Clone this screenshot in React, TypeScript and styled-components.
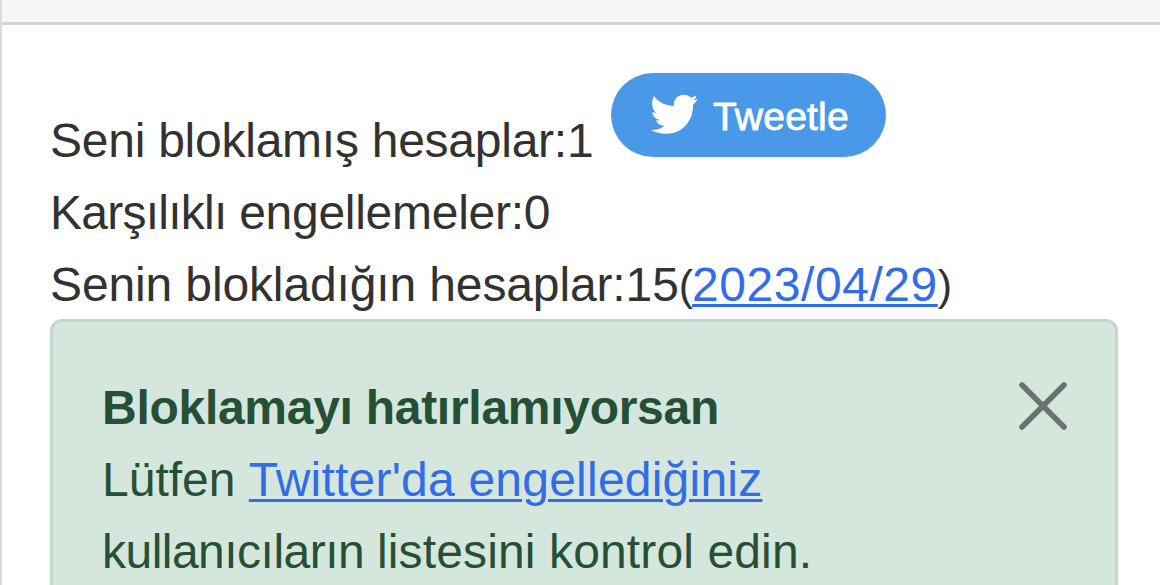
import React, { FunctionComponent } from 'react'
import styled, { createGlobalStyle } from 'styled-components'

const bodyFont = `'Liberation Sans', Arial, sans-serif`
const linkBlue = '#326cea'

const GlobalStyle = createGlobalStyle`
    * { box-sizing : border-box; }

    body {
        margin : 0;
        overflow : hidden;
        background : white;
    }
`

const Page = styled.div`
    width : 1160px;
    height : 585px;
    overflow : hidden;
    border-left : 2px solid #dcdcdc;
    font-family : ${bodyFont};
    font-size : 48px;
    line-height : 72px;
    color : #323232;
`

const TopBar = styled.div`
    height : 25px;
    background : #f6f6f6;
    border-bottom : 3px solid #d5d5d5;
`

const Content = styled.div`
    padding : 48px 42px 0 48px;
`

const Line = styled.div<{ spacing? : number }>`
    display : flex;
    align-items : flex-start;
    height : 72px;
    white-space : pre;
    letter-spacing : ${p => p.spacing || 0}px;
`

const FirstLine = styled(Line)`
    height : 104px;
`

const Text = styled.span`
    display : block;
    width : 543px;
    padding-top : 32px;
`

const Word = styled.span<{ spacing : number }>`
    letter-spacing : ${p => p.spacing}px;
`

const Paren = styled.span`
    font-size : 43px;
    letter-spacing : -1px;
`

const Link = styled.a<{ spacing? : number }>`
    color : ${linkBlue};
    letter-spacing : ${p => p.spacing || 0}px;
    text-decoration : underline;
    text-decoration-thickness : 3px;
    text-underline-offset : 3px;
`

const TweetButton = styled.button`
    display : flex;
    align-items : center;
    width : 275px;
    height : 84px;
    margin-left : 18px;
    padding : 0 0 0 39px;
    border : none;
    border-radius : 42px;
    background : #4a99e9;
    color : white;
    font-family : ${bodyFont};
    font-size : 39px;
    letter-spacing : .2px;

    svg { margin-right : 15px; }
`

const TweetLabel = styled.span`
    padding-top : 4px;
    -webkit-text-stroke : .8px white;
`

const Alert = styled.div`
    position : relative;
    height : 320px;
    margin-top : -2px;
    padding : 50px 49px 0;
    border : 3px solid #c3d8cd;
    border-radius : 12px;
    background : #d5e6dd;
    color : #265035;
`

const Title = styled(Line)`
    font-weight : 700;
`

const CloseButton = styled.button`
    position : absolute;
    top : 58px;
    right : 46px;
    width : 52px;
    height : 52px;
    padding : 0;
    border : none;
    background : none;

    svg { display : block; }
`

const Bird : FunctionComponent = () => (
    <svg width='48' height='50' viewBox='150 90 144 150' fill='white'>
        <path d='M162 109C177 128 198 138 222 138C219 120 232 104 251 104C260 104 267 107 273 113Q282 111 290 106Q288 115 280 121Q287 120 293 118Q288 127 279 134C280 181 249 221 198 221C181 221 165 217 153 210Q175 212 193 198Q173 196 168 181Q174 182 179 180Q157 174 157 155Q163 159 169 159C156 149 152 127 162 109Z' />
    </svg>
)

const App : FunctionComponent = () => {
    return (
        <Page>
            <GlobalStyle />
            <TopBar />
            <Content>
                <FirstLine spacing={-.25}>
                    <Text>Seni bloklamış hesaplar:1</Text>
                    <TweetButton>
                        <Bird />
                        <TweetLabel>Tweetle</TweetLabel>
                    </TweetButton>
                </FirstLine>
                <Line spacing={-.27}>
                    <Word spacing={-.75}>Karşılıklı </Word>engellemeler:0
                </Line>
                <Line spacing={-.13}>
                    Senin blokladığın hesaplar:15<Paren>(</Paren>
                    <Link spacing={.55}>2023/04/29</Link>
                    <Paren>)</Paren>
                </Line>
                <Alert>
                    <Title spacing={-.28}>Bloklamayı hatırlamıyorsan</Title>
                    <Line>
                        Lütfen <Link spacing={.22}>Twitter'da engellediğiniz</Link>
                    </Line>
                    <Line spacing={.13}>
                        <Word spacing={-.52}>kullanıcıların </Word>listesini kontrol edin.
                    </Line>
                    <CloseButton aria-label='Kapat'>
                        <svg width='52' height='52' viewBox='0 0 52 52' stroke='#6b7370' strokeWidth='5.6' strokeLinecap='round'>
                            <path d='M5 5L47 47M47 5L5 47' />
                        </svg>
                    </CloseButton>
                </Alert>
            </Content>
        </Page>
    )
}

export default App
